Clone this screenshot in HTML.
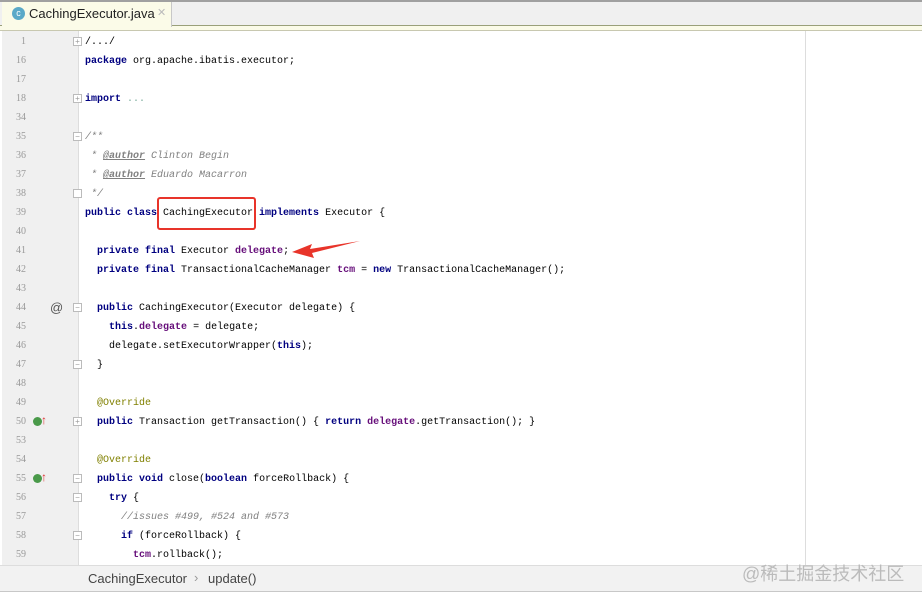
<html><head><style>
body{margin:0;width:922px;height:598px;background:#fff;position:relative;overflow:hidden;font-family:"Liberation Mono",monospace}
.tabbar{position:absolute;left:0;top:0;width:922px;height:26px;background:#f0f0f0;border-top:2px solid #a0a0a0;box-sizing:border-box;border-bottom:1px solid #9aa07a}
.strip{position:absolute;left:0;top:26px;width:922px;height:4px;background:#fbfbe8;border-bottom:1px solid #c8c8b0}
.tab{position:absolute;left:2px;top:2px;width:169px;height:25px;background:#fbfbe8;border-right:1px solid #c8c8c8;font-family:"Liberation Sans",sans-serif;font-size:13px;color:#222}
.gutter{position:absolute;left:2px;top:31px;width:76px;height:534px;background:#f0f0f0;border-right:1px solid #ddd}
.ln{position:absolute;left:2px;width:24px;text-align:right;font-size:10px;color:#999;font-family:"Liberation Serif",serif}
.code{position:absolute;left:85px;font-size:10px;color:#000;white-space:pre;line-height:19px}
.k{color:#000080;font-weight:bold}.f{color:#660e7a;font-weight:bold}.c{color:#808080;font-style:italic}.a{color:#808000}.t{color:#808080;font-weight:bold;font-style:italic;text-decoration:underline}
.fold{position:absolute;left:73px;width:9px;height:9px;border:1px solid #bbb;background:#fff;box-sizing:border-box;font-size:8px;line-height:7px;text-align:center;color:#999;font-family:"Liberation Sans"}
.status{position:absolute;left:0;top:565px;width:922px;height:25px;background:#f2f2f2;border-top:1px solid #ddd;border-bottom:1px solid #c8c8c8;font-family:"Liberation Sans",sans-serif;font-size:13px;color:#444}
</style></head><body>
<div class="tabbar"></div><div class="strip"></div>
<div class="tab"><span style="position:absolute;left:10px;top:5px;width:13px;height:13px;border-radius:50%;background:#5aa9c8;color:#fff;font-size:9px;text-align:center;line-height:13px">c</span><span style="position:absolute;left:27px;top:4px">CachingExecutor.java</span><span style="position:absolute;left:155px;top:4px;color:#bbb;font-size:11px">✕</span></div>
<div style="position:absolute;left:805px;top:31px;width:1px;height:534px;background:#ddd"></div>
<div class="gutter"></div>
<div id="lns"></div>
<div class="code" style="top:33px">/.../
<span class="k">package</span> org.apache.ibatis.executor;

<span class="k">import</span> <span style="color:#7a9">...</span>

<span class="c">/**</span>
<span class="c"> * <span class="t">@author</span> Clinton Begin</span>
<span class="c"> * <span class="t">@author</span> Eduardo Macarron</span>
<span class="c"> */</span>
<span class="k">public class</span> CachingExecutor <span class="k">implements</span> Executor {

  <span class="k">private final</span> Executor <span class="f">delegate</span>;
  <span class="k">private final</span> TransactionalCacheManager <span class="f">tcm</span> = <span class="k">new</span> TransactionalCacheManager();

  <span class="k">public</span> CachingExecutor(Executor delegate) {
    <span class="k">this</span>.<span class="f">delegate</span> = delegate;
    delegate.setExecutorWrapper(<span class="k">this</span>);
  }

  <span class="a">@Override</span>
  <span class="k">public</span> Transaction getTransaction() { <span class="k">return</span> <span class="f">delegate</span>.getTransaction(); }

  <span class="a">@Override</span>
  <span class="k">public void</span> close(<span class="k">boolean</span> forceRollback) {
    <span class="k">try</span> {
      <span class="c">//issues #499, #524 and #573</span>
      <span class="k">if</span> (forceRollback) {
        <span class="f">tcm</span>.rollback();
</div>
<div style="position:absolute;left:157px;top:197px;width:99px;height:33px;border:2px solid #e8342a;border-radius:3px;box-sizing:border-box"></div>
<svg style="position:absolute;left:290px;top:238px" width="72" height="22"><path d="M70 3 L20 11 L22 6 L2 14 L24 20 L22 15 Z" fill="#e8342a"/></svg>
<div style="position:absolute;left:50px;top:300px;font-family:'Liberation Sans';font-size:13px;color:#555">@</div>
<div style="position:absolute;left:33px;top:417px;width:9px;height:9px;border-radius:50%;background:#4a9a4a"></div><div style="position:absolute;left:41px;top:413px;color:#d33;font-size:12px;font-family:'Liberation Sans'">↑</div>
<div style="position:absolute;left:33px;top:474px;width:9px;height:9px;border-radius:50%;background:#4a9a4a"></div><div style="position:absolute;left:41px;top:470px;color:#d33;font-size:12px;font-family:'Liberation Sans'">↑</div>
<div class="fold" style="top:37px">+</div><div class="fold" style="top:94px">+</div><div class="fold" style="top:132px">−</div><div class="fold" style="top:189px"></div>
<div class="fold" style="top:303px">−</div><div class="fold" style="top:360px">−</div><div class="fold" style="top:417px">+</div><div class="fold" style="top:474px">−</div><div class="fold" style="top:493px">−</div><div class="fold" style="top:531px">−</div>
<div class="status"><span style="position:absolute;left:88px;top:5px">CachingExecutor</span><span style="position:absolute;left:194px;top:4px;color:#999">›</span><span style="position:absolute;left:208px;top:5px">update()</span><span style="position:absolute;left:742px;top:-6px;font-size:18px;color:#bbb;font-family:'Liberation Sans','Noto Sans CJK SC',sans-serif">@稀土掘金技术社区</span></div>
<script>
var n=[1,16,17,18,34,35,36,37,38,39,40,41,42,43,44,45,46,47,48,49,50,53,54,55,56,57,58,59],h='';
n.forEach(function(v,i){h+='<div class="ln" style="top:'+(36+19*i)+'px">'+v+'</div>'});
document.getElementById('lns').innerHTML=h;
</script>
</body></html>
